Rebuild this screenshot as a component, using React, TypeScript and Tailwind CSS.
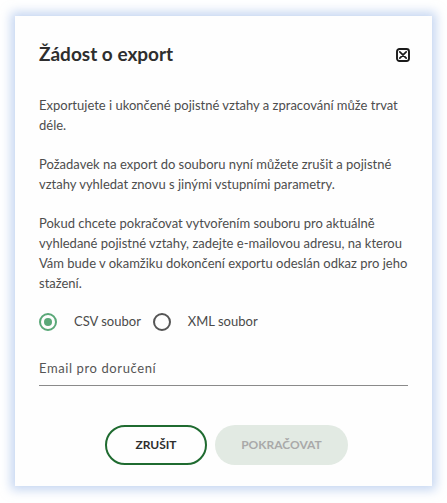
import { useState } from "react";

function CloseIcon() {
  return (
    <svg width="14" height="14" viewBox="0 0 14 14" fill="none">
      <rect x="1" y="1" width="12" height="12" rx="2.5" stroke="#1a1a1a" strokeWidth="1.9" />
      <path d="M3.8 3.8 L10.2 10.2 M10.2 3.8 L3.8 10.2" stroke="#1a1a1a" strokeWidth="1.7" strokeLinecap="round" />
    </svg>
  );
}

function Radio({ checked, label, onClick }: { checked: boolean; label: string; onClick: () => void }) {
  return (
    <button type="button" onClick={onClick} className="flex items-center">
      <span
        className={`w-[18px] h-[18px] rounded-full border-2 flex items-center justify-center ${
          checked ? "border-[#5aa878]" : "border-[#555]"
        }`}
      >
        {checked && <span className="w-[8px] h-[8px] rounded-full bg-[#5aa878]" />}
      </span>
      <span className="text-[13px] text-[#4a4a4a] ml-[17px]">{label}</span>
    </button>
  );
}

export default function App() {
  const [format, setFormat] = useState<"csv" | "xml">("csv");

  return (
    <div className="w-[447px] h-[503px] bg-white pt-[16px] pl-[15px]" style={{ fontFamily: "Lato, 'Noto Sans', sans-serif" }}>
      <div className="w-[417px] h-[470px] bg-[#fefefe] shadow-[0_0_10px_4px_rgba(150,180,230,0.55)] px-[24px] pt-[25px] flex flex-col">
        <div className="flex items-center justify-between">
          <h1 className="text-[19px] font-bold text-[#2e2e2e] leading-[26px]">Žádost o export</h1>
          <button type="button" className="mr-[-2px] mt-[2px]">
            <CloseIcon />
          </button>
        </div>

        <div className="mt-[28px] text-[13px] leading-[20px] text-[#4d4d4d] flex flex-col gap-[19px]">
          <p>Exportujete i ukončené pojistné vztahy a zpracování může trvat déle.</p>
          <p>Požadavek na export do souboru nyní můžete zrušit a pojistné vztahy vyhledat znovu s jinými vstupními parametry.</p>
          <p>
            Pokud chcete pokračovat vytvořením souboru pro aktuálně vyhledané pojistné vztahy, zadejte e-mailovou adresu, na
            kterou Vám bude v okamžiku dokončení exportu odeslán odkaz pro jeho stažení.
          </p>
        </div>

        <div className="mt-[19px] flex items-center gap-[12px]">
          <Radio checked={format === "csv"} label="CSV soubor" onClick={() => setFormat("csv")} />
          <Radio checked={format === "xml"} label="XML soubor" onClick={() => setFormat("xml")} />
        </div>

        <div className="mt-[23px] border-b border-[#8a8a8a] pb-[6px]">
          <input
            placeholder="Email pro doručení"
            className="w-full bg-transparent outline-none text-[13px] tracking-[0.6px] text-[#333] placeholder:text-[#555]"
          />
        </div>

        <div className="mt-[39px] flex justify-center gap-[8px] pl-[6px]">
          <button
            type="button"
            className="w-[102px] h-[40px] rounded-full border-2 border-[#1f6b30] text-[12px] font-bold text-[#2e2e2e]"
          >
            ZRUŠIT
          </button>
          <button
            type="button"
            disabled
            className="w-[133px] h-[40px] rounded-full bg-[#e2eae3] text-[12px] font-bold text-[#a9a9a9]"
          >
            POKRAČOVAT
          </button>
        </div>
      </div>
    </div>
  );
}
